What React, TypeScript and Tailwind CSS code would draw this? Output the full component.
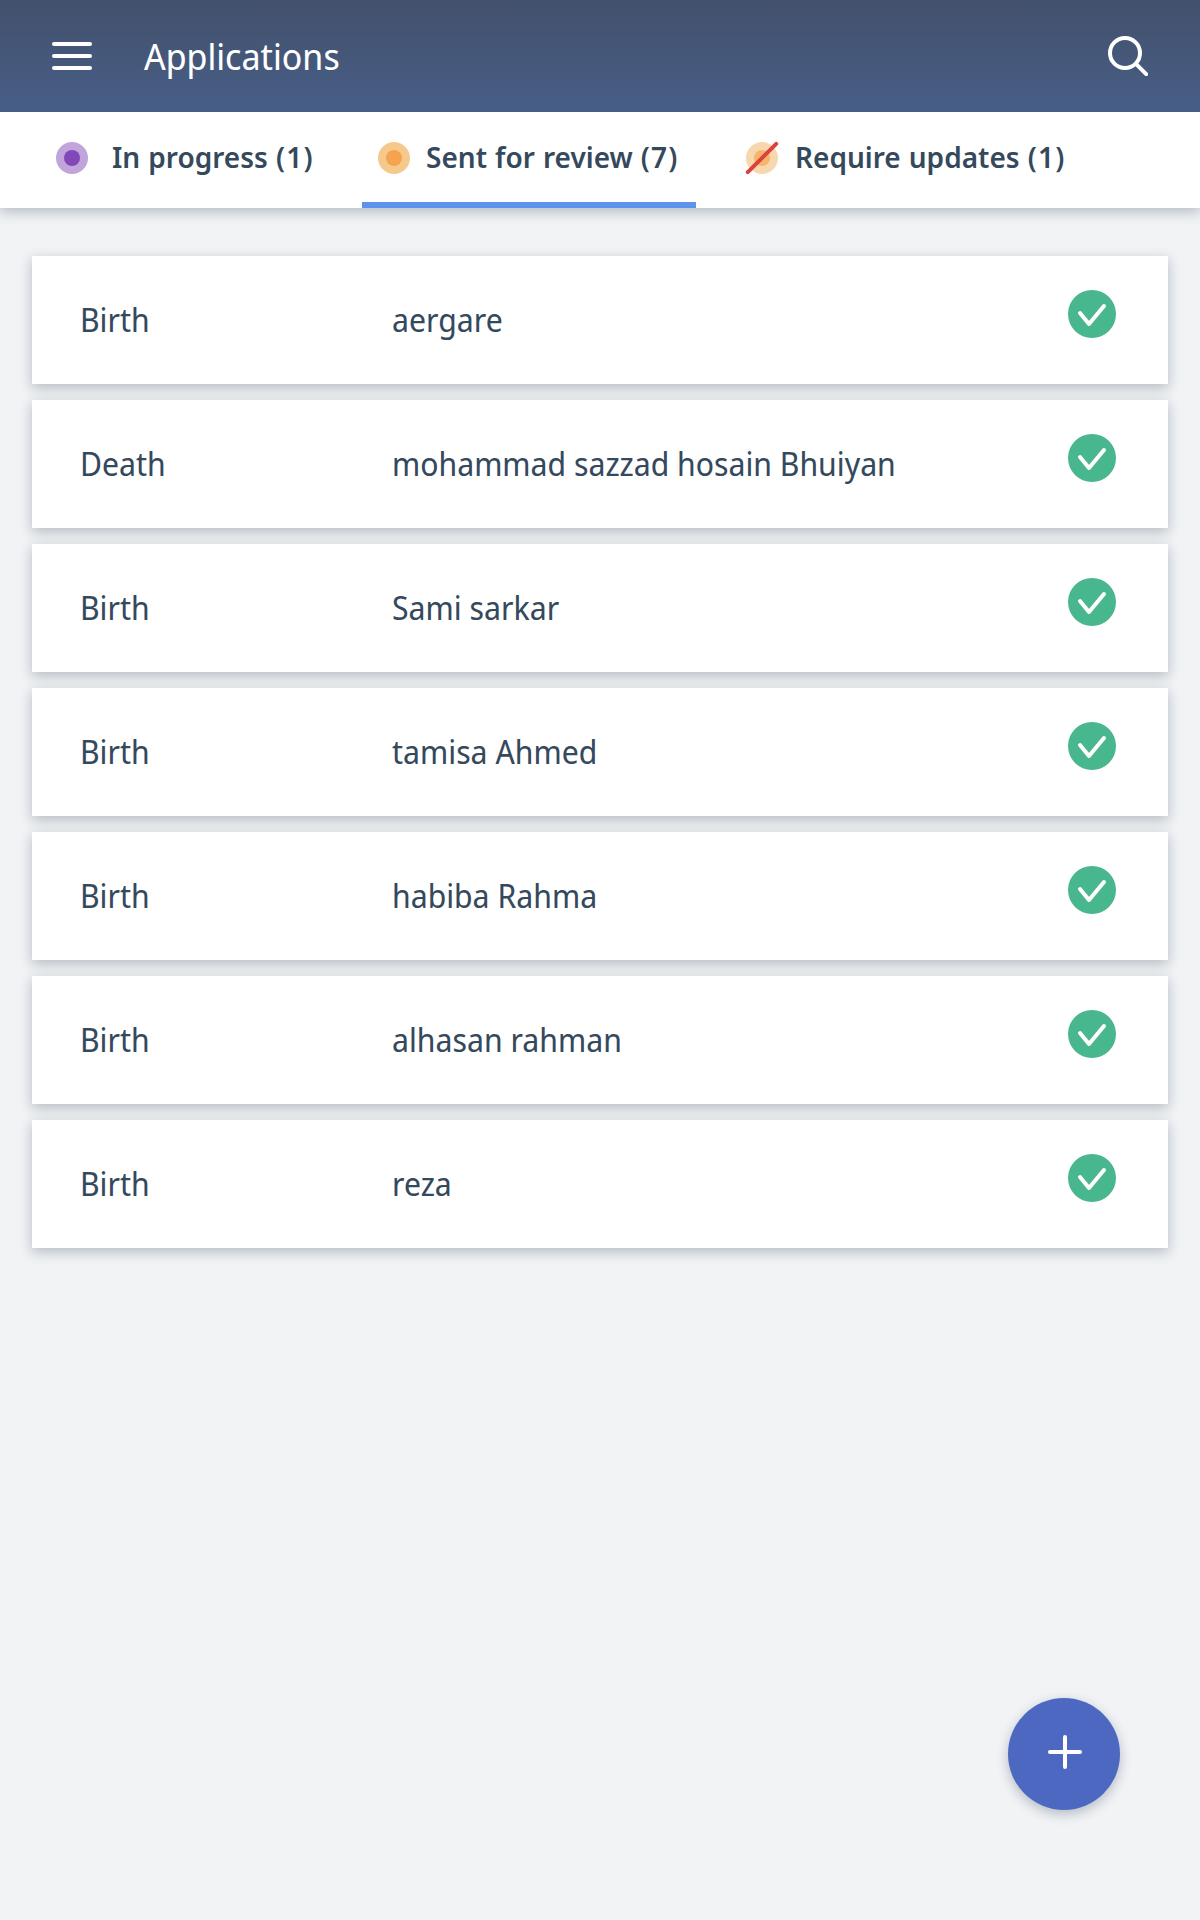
const applications = [
  { event: 'Birth', name: 'aergare' },
  { event: 'Death', name: 'mohammad sazzad hosain Bhuiyan' },
  { event: 'Birth', name: 'Sami sarkar' },
  { event: 'Birth', name: 'tamisa Ahmed' },
  { event: 'Birth', name: 'habiba Rahma' },
  { event: 'Birth', name: 'alhasan rahman' },
  { event: 'Birth', name: 'reza' },
];

function StatusIcon({ ring, dot, slashed = false }: { ring: string; dot: string; slashed?: boolean }) {
  return (
    <svg width="32" height="32" viewBox="0 0 32 32" className="shrink-0 overflow-visible">
      <circle cx="16" cy="16" r="16" fill={ring} />
      <circle cx="16" cy="16" r="8" fill={dot} />
      {slashed && <path d="M1.8 30.2L30.2 1.8" stroke="#D9423F" strokeWidth="4" strokeLinecap="round" />}
    </svg>
  );
}

function TabLabel({ text, count }: { text: string; count: number }) {
  return (
    <span className="pb-[2px] [word-spacing:0.8px]">
      {text} <span className="tracking-[1.2px]">({count})</span>
    </span>
  );
}

function CheckIcon() {
  return (
    <svg width="48" height="48" viewBox="0 0 48 48" fill="none">
      <circle cx="24" cy="24" r="24" fill="#49B78D" />
      <path d="M12 23L21 34L36 16" stroke="white" strokeWidth="4" strokeLinecap="round" strokeLinejoin="round" />
    </svg>
  );
}

export default function App() {
  return (
    <div className="flex h-[1920px] w-[1200px] flex-col bg-[#F1F3F5] font-['Noto_Sans_Display','Noto_Sans',sans-serif] text-[#35495D]">
      <header className="flex h-28 shrink-0 items-center bg-linear-to-b from-[#42506B] to-[#485F88] px-[52px] text-white">
        <button aria-label="Menu" className="mr-[52px]">
          <svg width="40" height="28" viewBox="0 0 40 28" stroke="white" strokeWidth="4" strokeLinecap="round">
            <path d="M2 2H38M2 14H38M2 26H38" />
          </svg>
        </button>
        <h1 className="grow pt-[2px] text-[36px] leading-[48px]">Applications</h1>
        <button aria-label="Search">
          <svg width="40" height="40" viewBox="0 0 40 40" fill="none" stroke="white" strokeWidth="4" strokeLinecap="round">
            <circle cx="17" cy="17" r="15" />
            <path d="M28.2 28.2L38.2 38.2" />
          </svg>
        </button>
      </header>

      <nav className="flex h-24 shrink-0 bg-white pl-10 font-['Noto_Sans',sans-serif] text-[28px] leading-10 font-semibold whitespace-nowrap shadow-[0_4px_12px_rgba(53,73,93,0.32)]">
        <button className="mr-[34px] flex w-[288px] items-center gap-6 px-4 pb-1">
          <StatusIcon ring="#C1A4DB" dot="#8049B7" />
          <TabLabel text="In progress" count={1} />
        </button>
        <button className="mr-[34px] flex w-[334px] items-center gap-4 border-b-6 border-[#5E93ED] px-4 pt-[2px]">
          <StatusIcon ring="#F5C98B" dot="#F5A34F" />
          <TabLabel text="Sent for review" count={7} />
        </button>
        <button className="flex items-center gap-[17px] px-4 pb-1">
          <StatusIcon ring="#F7D7AE" dot="#F6B56B" slashed />
          <TabLabel text="Require updates" count={1} />
        </button>
      </nav>

      <main className="flex grow flex-col gap-4 px-8 pt-12 text-[32px] leading-[48px]">
        {applications.map(({ event, name }) => (
          <div
            key={name}
            className="flex h-32 shrink-0 items-center bg-white pr-[52px] pl-12 shadow-[0_4px_12px_rgba(53,73,93,0.32)]"
          >
            <span className="w-[312px]">{event}</span>
            <span className="grow">{name}</span>
            <span className="pb-3">
              <CheckIcon />
            </span>
          </div>
        ))}
      </main>

      <button
        aria-label="New application"
        className="absolute top-[1698px] left-[1008px] flex size-28 items-center justify-center rounded-full bg-[#4C68C1] shadow-[0_4px_12px_rgba(53,73,93,0.32)]"
      >
        <svg width="34" height="34" viewBox="0 0 34 34" className="mb-1 ml-[2px]" stroke="white" strokeWidth="4" strokeLinecap="round">
          <path d="M17 2V32M2 17H32" />
        </svg>
      </button>
    </div>
  );
}
